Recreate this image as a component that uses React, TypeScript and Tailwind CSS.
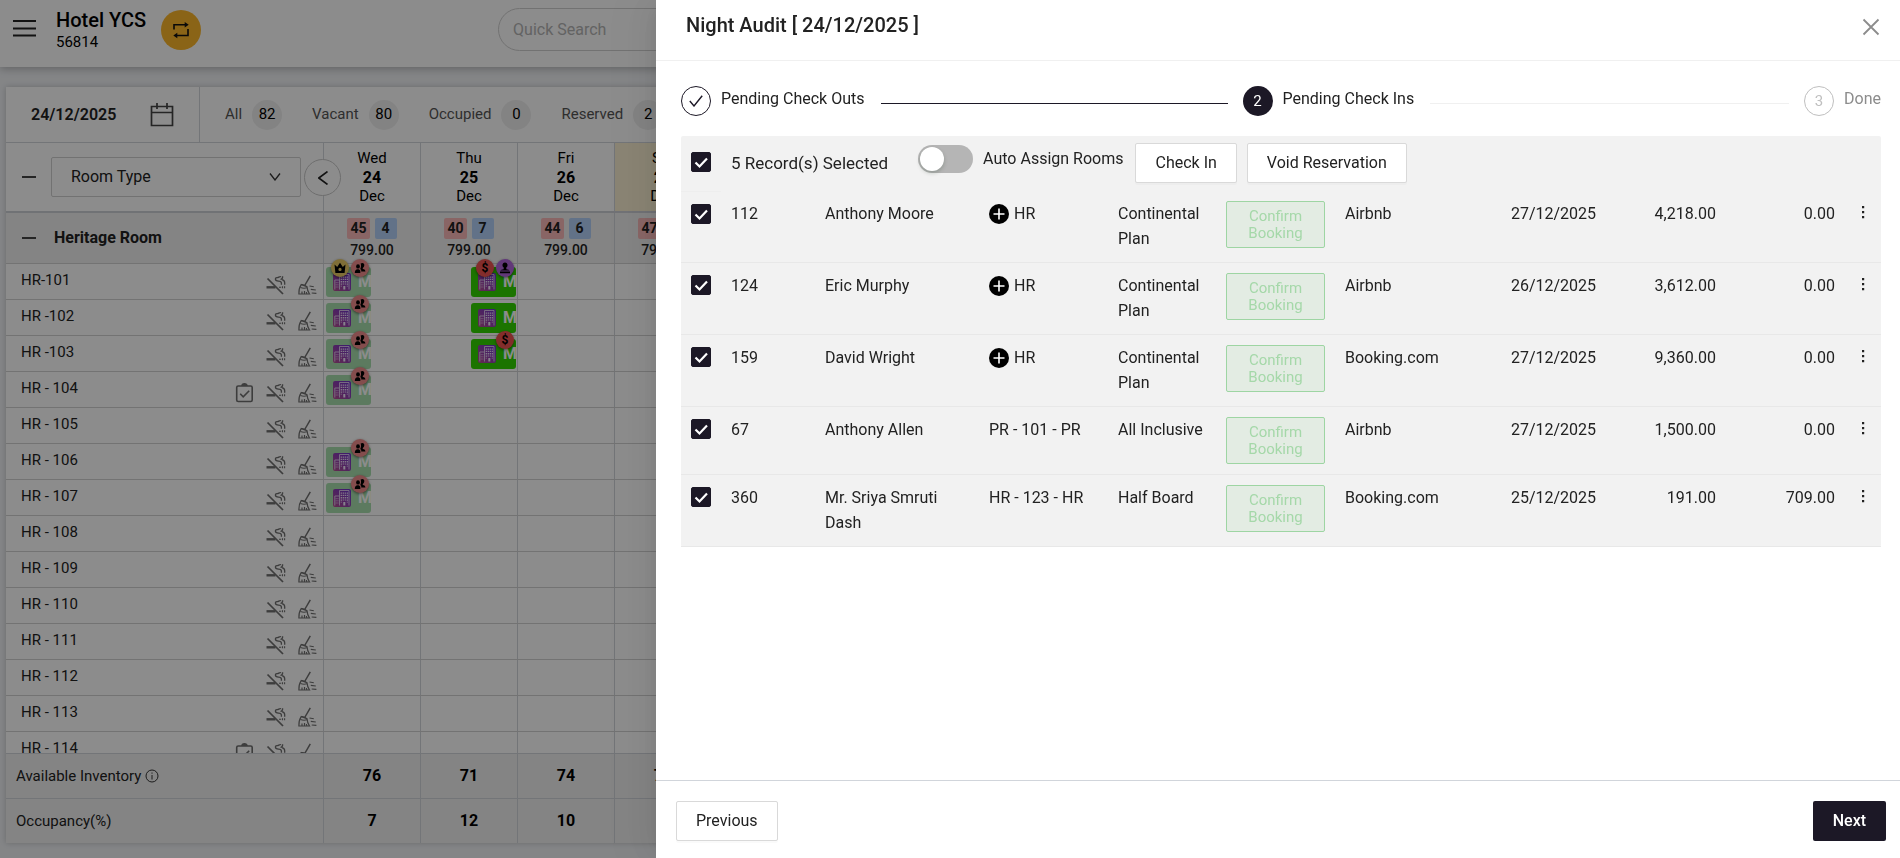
import { useState } from "react"
import { clsx } from "clsx"

interface IDay {
  week: string
  day: string
  month: string
  booked: number
  left: number
  price: string
  inventory: number
  occupancy: number
  weekend?: boolean
}

interface IBooking {
  day: number
  badges: BadgeType[]
}

interface IRoom {
  name: string
  clipboard?: boolean
  bookings?: IBooking[]
}

interface IReservation {
  id: string
  guest: string
  room: string
  unassigned?: boolean
  plan: string
  source: string
  date: string
  total: string
  balance: string
}

type BadgeType = "crown" | "group" | "dollar" | "pawn"

const days: IDay[] = [
  { week: "Wed", day: "24", month: "Dec", booked: 45, left: 4, price: "799.00", inventory: 76, occupancy: 7 },
  { week: "Thu", day: "25", month: "Dec", booked: 40, left: 7, price: "799.00", inventory: 71, occupancy: 12 },
  { week: "Fri", day: "26", month: "Dec", booked: 44, left: 6, price: "799.00", inventory: 74, occupancy: 10 },
  { week: "Sat", day: "27", month: "Dec", booked: 47, left: 3, price: "799.00", inventory: 77, occupancy: 6, weekend: true },
]

const rooms: IRoom[] = [
  {
    name: "HR-101",
    bookings: [
      { day: 0, badges: ["crown", "group"] },
      { day: 1, badges: ["dollar", "pawn"] },
    ],
  },
  {
    name: "HR -102",
    bookings: [
      { day: 0, badges: ["group"] },
      { day: 1, badges: [] },
    ],
  },
  {
    name: "HR -103",
    bookings: [
      { day: 0, badges: ["group"] },
      { day: 1, badges: ["dollar"] },
    ],
  },
  { name: "HR - 104", clipboard: true, bookings: [{ day: 0, badges: ["group"] }] },
  { name: "HR - 105" },
  { name: "HR - 106", bookings: [{ day: 0, badges: ["group"] }] },
  { name: "HR - 107", bookings: [{ day: 0, badges: ["group"] }] },
  { name: "HR - 108" },
  { name: "HR - 109" },
  { name: "HR - 110" },
  { name: "HR - 111" },
  { name: "HR - 112" },
  { name: "HR - 113" },
  { name: "HR - 114", clipboard: true },
]

const filters = [
  { label: "All", count: 82 },
  { label: "Vacant", count: 80 },
  { label: "Occupied", count: 0 },
  { label: "Reserved", count: 2 },
]

const reservations: IReservation[] = [
  { id: "112", guest: "Anthony Moore", room: "HR", unassigned: true, plan: "Continental Plan", source: "Airbnb", date: "27/12/2025", total: "4,218.00", balance: "0.00" },
  { id: "124", guest: "Eric Murphy", room: "HR", unassigned: true, plan: "Continental Plan", source: "Airbnb", date: "26/12/2025", total: "3,612.00", balance: "0.00" },
  { id: "159", guest: "David Wright", room: "HR", unassigned: true, plan: "Continental Plan", source: "Booking.com", date: "27/12/2025", total: "9,360.00", balance: "0.00" },
  { id: "67", guest: "Anthony Allen", room: "PR - 101 - PR", plan: "All Inclusive", source: "Airbnb", date: "27/12/2025", total: "1,500.00", balance: "0.00" },
  { id: "360", guest: "Mr. Sriya Smruti Dash", room: "HR - 123 - HR", plan: "Half Board", source: "Booking.com", date: "25/12/2025", total: "191.00", balance: "709.00" },
]

const badgeColors: Record<BadgeType, string> = {
  crown: "bg-[#e8c964]",
  group: "bg-[#f08c8c]",
  dollar: "bg-[#ef5350]",
  pawn: "bg-[#b267dd]",
}

function BadgeIcon({ type }: { type: BadgeType }) {
  if (type === "dollar") {
    return <span className="text-xs font-bold leading-none">$</span>
  }

  return (
    <svg viewBox="0 0 12 12" className="size-3" fill="#000">
      {type === "crown" && (
        <path
          fillRule="evenodd"
          d="M0.5 2.5 3.2 5 6 0.8 8.8 5l2.7-2.5L10.6 11H1.4zM6 5.8a1.6 1.6 0 1 0 0 3.2 1.6 1.6 0 0 0 0-3.2z"
        />
      )}
      {type === "group" && (
        <>
          <ellipse cx="4" cy="4.4" rx="1.900" ry="2.200" />
          <path d="M.8 11c0-2.500 1-3.800 2.800-3.800 1.500 0 2.400.6 2.700 1.500V11zM6.600 1.600C8.500.2 10.600 1.200 10.300 3.300c-.2 1.400-.8 2.200-1.500 2.600v1c1.700.1 2.600 1.200 2.600 2.700H7.200V8L6.300 7c.9-1.700 1-3.600.3-5.400z" />
        </>
      )}
      {type === "pawn" && (
        <path d="M6 .6a2.700 2.700 0 0 1 1.300 5v1.600c1.600.1 2.900.600 3.300 1.400H1.400c.4-.8 1.700-1.300 3.300-1.400V5.600A2.700 2.700 0 0 1 6 .6zM1 9.500h10v1.800H1z" />
      )}
    </svg>
  )
}

function BuildingIcon() {
  return (
    <svg viewBox="0 0 18 18" className="size-[18px] shrink-0">
      <defs>
        <linearGradient id="building" x1="1" y1="0" x2="0" y2="1">
          <stop offset="0" stopColor="#6a2fd0" />
          <stop offset="1" stopColor="#b5508f" />
        </linearGradient>
      </defs>
      <rect width="18" height="18" rx="2" fill="url(#building)" />
      <path d="M6.500 16.500v-15h9.500v15M1.800 16.500V7h4.200" fill="none" stroke="#e3d0f2" strokeWidth=".9" />
      <g fill="none" stroke="#f6ecff">
        <path d="M8.300 3.500v10M10.300 3.500v8M12.300 3.500v8M14.300 3.500v10" strokeWidth="1.200" strokeDasharray="1.300 1" />
        <path d="M11.300 13v3.500" strokeWidth="2" />
        <path d="M3.200 9v6M4.900 9v6" strokeWidth=".9" strokeDasharray="1.200 1" opacity=".7" />
      </g>
    </svg>
  )
}

function NoSmokingIcon() {
  return (
    <svg viewBox="0 0 20 20" className="size-5" fill="none" stroke="#707070">
      <path d="M1.500 3.500 17 19" strokeWidth="1.700" />
      <path d="M0.500 12.300h9" strokeWidth="2.400" />
      <path d="M13 12.300h2.200M16.500 11.300v2M18.600 11.300v2" strokeWidth="1.100" />
      <path d="M15 1.800c-1.500-.8-2.300.8-3.600.8-1-.1-2 .2-2 1.500 0 1.700 1.500 2 3.100 2 1.700 0 2.900.5 2.900 2.100v1.600" strokeWidth="1.300" />
      <path d="M14.500 4.500c1.400-.4 2.300-1.500 2.100-3.300M16 4.600c1.800.4 2.700 1.500 2.700 3.200v2" strokeWidth="1.300" />
    </svg>
  )
}

function BroomIcon() {
  return (
    <svg viewBox="0 0 20 20" className="size-5" fill="none" stroke="#707070" strokeWidth="1.200">
      <path d="M12.300.8 7 10" strokeWidth="1.500" />
      <path d="M3.200 9.600c2.300-.4 4.400.4 5.800 2.200M3.200 9.600C1.500 12 .8 15.500.900 19h10.600c-1.400-2-2.300-4.500-2.500-7.200z" />
      <path d="M2.400 12.500c2.200.9 4.300 1 6.600.3M4 19v-2.500M6.500 19v-3M8.800 19l-.4-2" />
      <path d="m11.500 11 4.300.8M12.800 14.400l5 .6M13.700 18l4.700.4" strokeWidth="1.100" />
    </svg>
  )
}

function ClipboardIcon() {
  return (
    <svg viewBox="0 0 20 20" className="size-5" fill="none" stroke="#707070" strokeWidth="1.600">
      <rect x="2.700" y="3" width="15.500" height="15.500" rx="1.500" />
      <path d="M8 3a2.500 2.200 0 0 1 5 0" fill="#707070" />
      <path d="m6.200 10.800 3 3 6-6" />
    </svg>
  )
}

function CheckBox({ label }: { label: string }) {
  return (
    <label className="grid size-5 place-items-center">
      <input
        type="checkbox"
        defaultChecked
        aria-label={label}
        className="peer size-5 appearance-none rounded-xs border border-gray-300 bg-white [grid-area:1/1] checked:border-[#1c1826] checked:bg-[#1c1826]"
      />
      <svg viewBox="0 0 20 20" className="pointer-events-none size-5 opacity-0 [grid-area:1/1] peer-checked:opacity-100">
        <path d="m4.500 10.500 4 4 7.500-8" fill="none" stroke="#fff" strokeWidth="2.200" />
      </svg>
    </label>
  )
}

function Booking({ booking }: { booking: IBooking }) {
  const arriving = booking.day === 0

  return (
    <div className={clsx("absolute top-[3px] h-[30px] w-[45px]", arriving ? "left-[2px]" : "left-[50px]")}>
      <div
        className={clsx(
          "flex h-full items-center gap-[7px] overflow-hidden rounded-[3px] pl-[7px]",
          arriving ? "bg-[#a8dfae]" : "bg-[#32d400]"
        )}
      >
        <BuildingIcon />
        <span className="font-bold text-white">M</span>
      </div>
      <div className="absolute -top-2 right-[2px] flex gap-[2px]">
        {booking.badges.map((type) => (
          <span
            key={type}
            className={clsx(
              "flex size-[18px] items-center justify-center rounded-full text-black shadow-[0_1px_3px_rgba(0,0,0,0.5)]",
              badgeColors[type]
            )}
          >
            <BadgeIcon type={type} />
          </span>
        ))}
      </div>
    </div>
  )
}

function TopBar() {
  return (
    <header className="relative flex h-[67px] shrink-0 items-start bg-white shadow-[0_2px_8px_rgba(0,0,0,0.25)]">
      <button aria-label="Menu" className="mt-[18px] ml-[13px]">
        <svg viewBox="0 0 23 20" className="h-5 w-[23px]" stroke="#222" strokeWidth="2">
          <path d="M0 3h23M0 10.500h23M0 17.500h23" />
        </svg>
      </button>
      <div className="mt-2 ml-5 text-black">
        <h1 className="text-xl leading-6 font-medium">Hotel YCS</h1>
        <p className="text-[15px] leading-5">56814</p>
      </div>
      <button aria-label="Switch property" className="mt-[10px] ml-[15px] flex size-10 items-center justify-center rounded-full bg-[#fbb62b]">
        <svg viewBox="0 0 18 18" className="size-[18px]" fill="none" stroke="#111" strokeWidth="1.600">
          <path d="M2 8.500V3.800h11.500M16 8v6.500H4.500" />
          <path d="m12.700 1 4 2.800-4 2.800zM5.300 11.700l-4 2.800 4 2.800z" fill="#111" stroke="none" />
        </svg>
      </button>
      <input
        type="search"
        aria-label="Quick Search"
        placeholder="Quick Search"
        className="mt-2 ml-[297px] h-[43px] w-[400px] rounded-full border border-[#d0d0d0] px-[14px] text-base placeholder:text-[#b4b4b4]"
      />
    </header>
  )
}

function Toolbar() {
  return (
    <div className="flex h-14 border-b border-[#d1d5db]">
      <div className="flex w-[194px] items-center justify-between border-r border-[#d1d5db] pr-5 pl-[25px]">
        <span className="font-semibold">24/12/2025</span>
        <button aria-label="Pick a date" className="p-[5px]">
          <svg viewBox="0 0 24 24" className="size-6" fill="none" stroke="#444" strokeWidth="1.700">
            <path d="M1.500 3.500h21v19h-21zM1.500 9.500h21M7 0v6M17 0v6" />
          </svg>
        </button>
      </div>
      <div className="flex items-center gap-[30px] pl-[25px]">
        {filters.map((filter) => (
          <div key={filter.label} className="flex items-center gap-[10px] text-[15px]">
            <span className="text-[#555]">{filter.label}</span>
            <span className="flex size-[30px] items-center justify-center rounded-full bg-[#efefef] text-black">
              {filter.count}
            </span>
          </div>
        ))}
      </div>
    </div>
  )
}

function Calendar() {
  return (
    <section className="relative mx-[6px] mt-5 mb-[15px] flex min-h-0 flex-1 flex-col overflow-hidden bg-white shadow-[0_0_6px_rgba(0,0,0,0.2)]">
      <Toolbar />

      <div className="relative flex h-[70px] shrink-0 border-b-2 border-[#cdcfd6]">
        <div className="flex w-[318px] shrink-0 items-center border-r border-[#d1d5db] pl-4">
          <button aria-label="Collapse all" className="w-[14px] border-t-2 border-[#444]" />
          <div className="relative ml-[15px] flex items-center">
            <select aria-label="Room Type" className="h-10 w-[250px] appearance-none rounded-xs border border-[#d0d0d0] bg-white pl-[19px]">
              <option>Room Type</option>
            </select>
            <svg viewBox="0 0 12 8" className="pointer-events-none absolute right-5 h-2 w-3" fill="none" stroke="#333" strokeWidth="1.300">
              <path d="m1 .5 5 6.500 5-6.500" />
            </svg>
          </div>
        </div>
        {days.map((item) => (
          <div
            key={item.day}
            className={clsx(
              "w-[97px] shrink-0 border-r border-[#d1d5db] pt-[6px] text-center text-[15px] leading-[19px] text-black",
              item.weekend && "bg-[#fbf1d3]"
            )}
          >
            <div>{item.week}</div>
            <div className="text-base leading-[19px] font-bold">{item.day}</div>
            <div>{item.month}</div>
          </div>
        ))}
        <button
          aria-label="Previous days"
          className="absolute top-4 left-[298px] flex size-[37px] items-center justify-center rounded-full border border-[#c8c8c8] bg-white"
        >
          <svg viewBox="0 0 10 14" className="h-[14px] w-[10px]" fill="none" stroke="#222" strokeWidth="1.600">
            <path d="M9.500.500.8 7l8.700 6.500" />
          </svg>
        </button>
      </div>

      <div className="flex h-[51px] shrink-0 border-b border-[#d1d1d1] bg-[#f1f1f1]">
        <div className="flex w-[318px] shrink-0 items-center gap-[18px] border-r border-[#d1d5db] pl-4">
          <button aria-label="Collapse Heritage Room" className="w-[14px] border-t-2 border-[#444]" />
          <h2 className="font-bold">Heritage Room</h2>
        </div>
        {days.map((item) => (
          <div key={item.day} className="flex w-[97px] shrink-0 flex-col items-center border-r border-[#d1d5db] pt-[5px]">
            <div className="flex gap-[5px] text-sm leading-[21px] font-bold">
              <span className="min-w-[22px] rounded-xs bg-[#f9b9b9] px-[3px] text-center">{item.booked}</span>
              <span className="min-w-[22px] rounded-xs bg-[#b3d0f7] px-[3px] text-center">{item.left}</span>
            </div>
            <span className="text-sm leading-[22px] font-medium">{item.price}</span>
          </div>
        ))}
      </div>

      {/* the extra top padding leaves room for badges that stick out of the first row */}
      <div className="relative -mt-2 min-h-0 flex-1 overflow-hidden pt-2">
        {rooms.map((room) => (
          <div key={room.name} className="flex h-9 border-b border-[#d1d1d1]">
            <div className="flex w-[318px] shrink-0 justify-between border-r border-[#d1d5db] pr-[5px] pl-[15px]">
              <span className="text-[15px] leading-8">{room.name}</span>
              <div className="flex gap-3 pt-[11px]">
                {room.clipboard && <ClipboardIcon />}
                <NoSmokingIcon />
                <BroomIcon />
              </div>
            </div>
            {days.map((item, index) => (
              <div key={item.day} className="relative w-[97px] shrink-0 border-r border-[#d1d5db]">
                {room.bookings
                  ?.filter((booking) => booking.day === index)
                  .map((booking) => <Booking key={booking.day} booking={booking} />)}
              </div>
            ))}
          </div>
        ))}
      </div>

      <div className="shrink-0 bg-[#f1f1f1] text-[15px]">
        <div className="flex h-[45px] border-t border-[#d1d5db]">
          <div className="flex w-[318px] shrink-0 items-center gap-1 border-r border-[#d1d5db] pl-[10px]">
            Available Inventory
            <svg viewBox="0 0 14 14" className="size-[14px]" fill="none" stroke="#333">
              <circle cx="7" cy="7" r="6" />
              <path d="M7 6v4.500M7 3.500v1.200" />
            </svg>
          </div>
          {days.map((item) => (
            <div key={item.day} className="flex w-[97px] shrink-0 items-center justify-center border-r border-[#d1d5db] text-base font-bold text-black">
              {item.inventory}
            </div>
          ))}
        </div>
        <div className="flex h-[45px] border-t border-[#d1d5db]">
          <div className="flex w-[318px] shrink-0 items-center border-r border-[#d1d5db] pl-[10px]">Occupancy(%)</div>
          {days.map((item) => (
            <div key={item.day} className="flex w-[97px] shrink-0 items-center justify-center border-r border-[#d1d5db] text-base font-bold text-black">
              {item.occupancy}
            </div>
          ))}
        </div>
      </div>
    </section>
  )
}

function Steps() {
  return (
    <ol className="flex items-start gap-[15px] leading-[26px]">
      <li className="flex flex-1 items-start gap-[10px]">
        <span className="flex size-[30px] items-center justify-center rounded-full border border-[#1c1826]">
          <svg viewBox="0 0 14 12" className="h-3 w-[14px]" fill="none" stroke="#1c1826" strokeWidth="1.400">
            <path d="m.800 6 4.200 5L13.200.800" />
          </svg>
        </span>
        <span>Pending Check Outs</span>
        <span className="mt-[17px] ml-[6px] h-px flex-1 bg-[#1c1826]" />
      </li>
      <li className="flex flex-1 items-start gap-[10px]">
        <span className="flex size-[30px] items-center justify-center rounded-full bg-[#1c1826] text-[15px] text-white">2</span>
        <span>Pending Check Ins</span>
        <span className="mt-[17px] ml-[6px] h-px flex-1 bg-[#f0f0f0]" />
      </li>
      <li className="flex items-start gap-[10px] text-[#8c8c8c]">
        <span className="flex size-[30px] items-center justify-center rounded-full border border-[#bfbfbf] text-[15px] text-[#bfbfbf]">3</span>
        <span>Done</span>
      </li>
    </ol>
  )
}

function ReservationRow({ item }: { item: IReservation }) {
  return (
    <tr className="border-b border-[#e8e8e8] align-top leading-[25px]">
      <td className="px-[10px] pt-3">
        <CheckBox label={`Reservation ${item.id}`} />
      </td>
      <td className="px-[10px] pt-[10px] pb-[11px]">{item.id}</td>
      <td className="px-[10px] pt-[10px] pb-[11px]">{item.guest}</td>
      <td className="px-[10px] pt-[10px] pb-[11px]">
        <div className="flex items-center gap-[5px]">
          {item.unassigned && (
            <button aria-label="Assign room">
              <svg viewBox="0 0 20 20" className="block size-5">
                <circle cx="10" cy="10" r="10" />
                <path d="M10 4.500v11M4.500 10h11" stroke="#fff" strokeWidth="1.600" />
              </svg>
            </button>
          )}
          {item.room}
        </div>
      </td>
      <td className="px-[10px] pt-[10px] pb-[11px]">{item.plan}</td>
      <td className="p-[10px]">
        <button
          disabled
          className="block h-[47px] w-full rounded-xs border border-[#9ed5a3] bg-[#e3ece3] px-4 text-[15px] leading-[17px] text-[#a5d8a9]"
        >
          Confirm Booking
        </button>
      </td>
      <td className="px-[10px] pt-[10px] pb-[11px]">{item.source}</td>
      <td className="px-[10px] pt-[10px] pb-[11px]">{item.date}</td>
      <td className="px-[10px] pt-[10px] pb-[11px] text-right">{item.total}</td>
      <td className="px-[10px] pt-[10px] pb-[11px] text-right">{item.balance}</td>
      <td className="pt-[14px]">
        <button aria-label="More actions" className="mx-auto block">
          <svg viewBox="0 0 4 16" className="h-4 w-1" fill="#222">
            <path d="M1 1h2.200v2.200H1zM1 6h2.200v2.200H1zM1 11h2.200v2.200H1z" />
          </svg>
        </button>
      </td>
    </tr>
  )
}

function NightAudit() {
  const [autoAssign, setAutoAssign] = useState<boolean>(false)

  return (
    <aside className="fixed inset-y-0 right-0 left-[656px] flex flex-col bg-white shadow-[-6px_0_16px_-8px_rgba(0,0,0,0.08),-9px_0_28px_0_rgba(0,0,0,0.05),-12px_0_48px_16px_rgba(0,0,0,0.03)]">
      <div className="flex h-[61px] shrink-0 items-start justify-between border-b border-[#f0f0f0] pt-3 pr-5 pl-[30px]">
        <h2 className="text-xl leading-[26px] font-medium">Night Audit [ 24/12/2025 ]</h2>
        <button aria-label="Close" className="mt-[6px]">
          <svg viewBox="0 0 18 18" className="size-[18px]" stroke="#8c8c8c" strokeWidth="1.800">
            <path d="m1.500 1.500 15 15M16.500 1.500l-15 15" />
          </svg>
        </button>
      </div>

      <div className="flex-1 overflow-hidden pt-[25px] pr-[19px] pl-[25px]">
        <Steps />

        <table className="mt-5 w-full table-fixed border-collapse rounded-xs bg-[#f2f2f2] text-left">
          <colgroup>
            <col className="w-10" />
            <col className="w-[94px]" />
            <col className="w-[164px]" />
            <col className="w-[129px]" />
            <col className="w-[108px]" />
            <col className="w-[119px]" />
            <col />
            <col className="w-[107px]" />
            <col className="w-[118px]" />
            <col className="w-[119px]" />
            <col className="w-9" />
          </colgroup>
          <thead>
            <tr className="h-[55px] align-top font-normal">
              <th className="border-b border-[#eee] px-[10px] pt-4">
                <CheckBox label="Select all" />
              </th>
              <th colSpan={10} className="pl-[10px] font-normal">
                <div className="flex items-start pt-[7px]">
                  <span className="text-[17px] leading-10">5 Record(s) Selected</span>
                  <input
                    id="auto-assign"
                    type="checkbox"
                    role="switch"
                    checked={autoAssign}
                    onChange={(e) => setAutoAssign(e.target.checked)}
                    className="mt-[2px] ml-[30px] h-7 w-[55px] appearance-none rounded-full bg-[#b5b5b5] p-[2px] before:block before:size-6 before:rounded-full before:bg-white before:shadow-[0_2px_4px_rgba(0,35,11,0.2)] checked:bg-[#1c1826] checked:before:ml-[27px]"
                  />
                  <label htmlFor="auto-assign" className="ml-[10px] leading-[31px]">
                    Auto Assign Rooms
                  </label>
                  <button className="ml-3 h-10 rounded-xs border border-[#d9d9d9] bg-white px-[19px] shadow-[0_2px_0_rgba(0,0,0,0.02)]">
                    Check In
                  </button>
                  <button className="ml-[10px] h-10 rounded-xs border border-[#d9d9d9] bg-white px-[19px] shadow-[0_2px_0_rgba(0,0,0,0.02)]">
                    Void Reservation
                  </button>
                </div>
              </th>
            </tr>
          </thead>
          <tbody>
            {reservations.map((item) => (
              <ReservationRow key={item.id} item={item} />
            ))}
          </tbody>
        </table>
      </div>

      <div className="flex h-[78px] shrink-0 items-start justify-between border-t border-[#d1d5db] pt-5 pr-[14px] pl-5">
        <button className="h-10 rounded-xs border border-[#d9d9d9] bg-white px-[19px] shadow-[0_2px_0_rgba(0,0,0,0.02)]">
          Previous
        </button>
        <button className="h-10 rounded-xs bg-[#1c1826] px-5 font-medium text-white">Next</button>
      </div>
    </aside>
  )
}

function App() {
  return (
    <div className="flex h-screen flex-col overflow-hidden bg-[#f0f2f5] font-[Roboto,sans-serif] text-base text-[#222]">
      <TopBar />
      <Calendar />
      <div className="fixed inset-0 bg-black/45" />
      <NightAudit />
    </div>
  )
}

export default App
